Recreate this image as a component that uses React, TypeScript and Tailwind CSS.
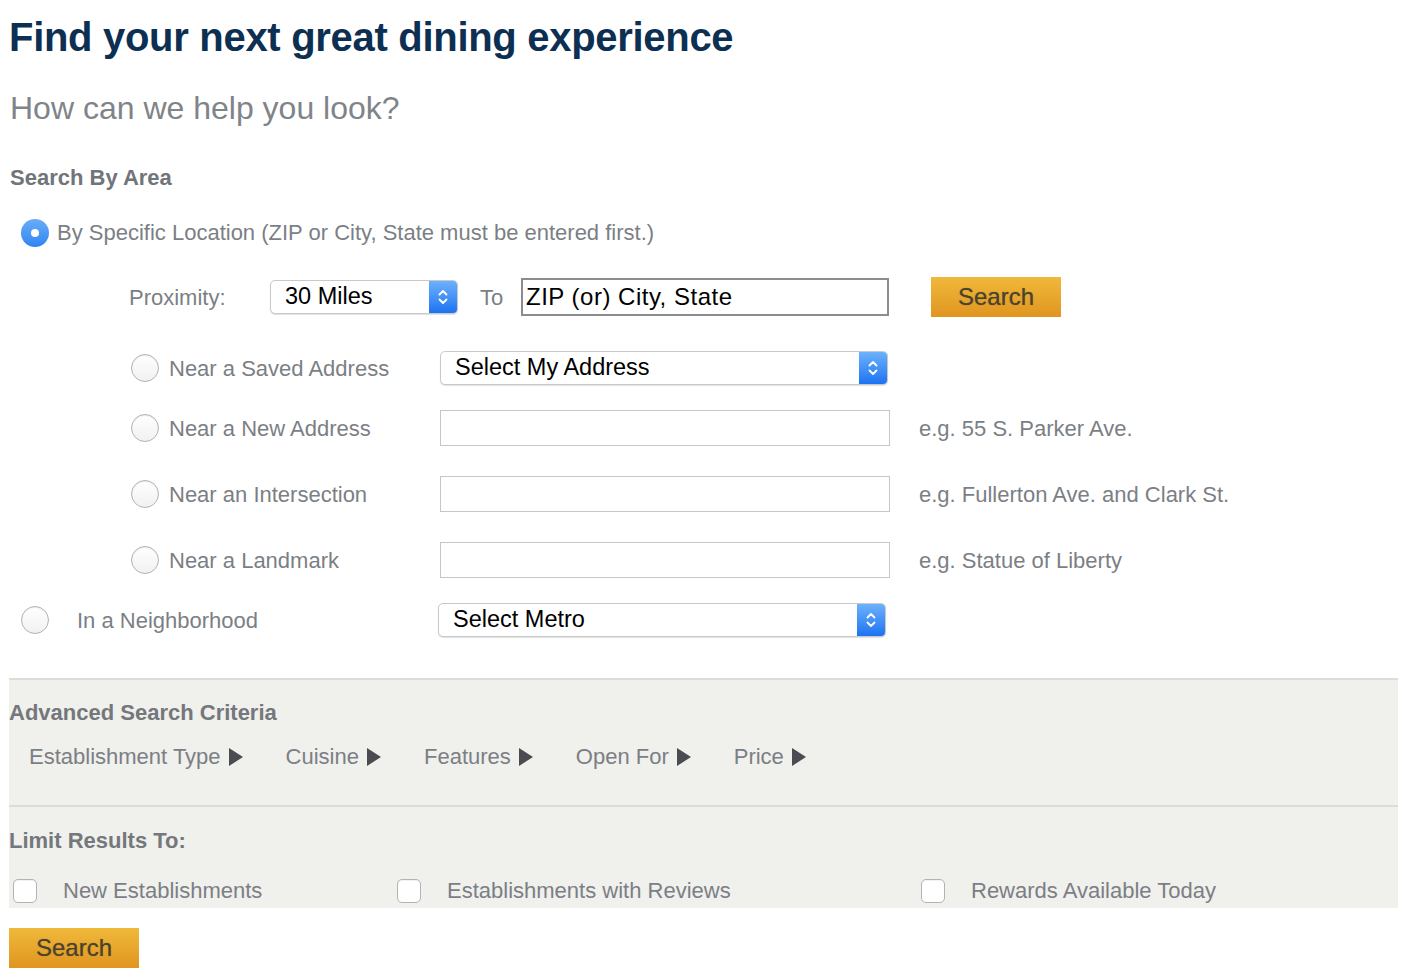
import React from "react";

const font = { fontFamily: '"Liberation Sans", Arial, sans-serif' };

function Chevrons() {
  return (
    <svg width="12" height="20" viewBox="0 0 12 20" fill="none">
      <path d="M2.5 7.5 L6 4 L9.5 7.5" stroke="white" strokeWidth="1.8" strokeLinecap="round" strokeLinejoin="round" />
      <path d="M2.5 12.5 L6 16 L9.5 12.5" stroke="white" strokeWidth="1.8" strokeLinecap="round" strokeLinejoin="round" />
    </svg>
  );
}

function FakeSelect({ label, width }: { label: string; width: string }) {
  return (
    <div
      className={`flex h-[34px] items-stretch overflow-hidden rounded-[5px] border border-[#c9c9c9] bg-white shadow-[0_1px_1px_rgba(0,0,0,0.12)] ${width}`}
    >
      <span className="flex flex-1 items-center pl-[14px] text-[23.5px] text-black">{label}</span>
      <span className="flex w-[28px] items-center justify-center bg-gradient-to-b from-[#6cb1fb] to-[#1c72f2]">
        <Chevrons />
      </span>
    </div>
  );
}

function Radio({ checked = false }: { checked?: boolean }) {
  if (checked) {
    return (
      <span className="flex h-[28px] w-[28px] shrink-0 items-center justify-center rounded-full bg-gradient-to-b from-[#69acf7] to-[#2d86f2]">
        <span className="h-[8px] w-[8px] rounded-full bg-white" />
      </span>
    );
  }
  return (
    <span className="h-[28px] w-[28px] shrink-0 rounded-full border border-[#b3b3b3] bg-gradient-to-b from-white to-[#f1f1f1] shadow-[inset_0_1px_1px_rgba(0,0,0,0.08)]" />
  );
}

function Checkbox() {
  return (
    <span className="h-[24px] w-[24px] shrink-0 rounded-[5px] border border-[#b3b3b3] bg-white shadow-[inset_0_1px_1px_rgba(0,0,0,0.06)]" />
  );
}

function GoldButton({ className = "" }: { className?: string }) {
  return (
    <button
      className={`flex h-[40px] w-[130px] items-center justify-center bg-gradient-to-b from-[#efb93a] to-[#e0951f] text-[24px] text-[#4a4230] ${className}`}
      style={{ textShadow: "0 0 1px rgba(60,50,20,0.5)" }}
    >
      Search
    </button>
  );
}

function Triangle() {
  return (
    <svg width="16" height="20" viewBox="0 0 16 20" className="ml-[7px]">
      <path d="M1 1 L15 10 L1 19 Z" fill="#4b4c51" />
    </svg>
  );
}

const nearRows = [
  { label: "Near a New Address", hint: "e.g. 55 S. Parker Ave." },
  { label: "Near an Intersection", hint: "e.g. Fullerton Ave. and Clark St." },
  { label: "Near a Landmark", hint: "e.g. Statue of Liberty" },
];

const criteria = ["Establishment Type", "Cuisine", "Features", "Open For", "Price"];

export default function App() {
  return (
    <div className="min-h-[980px] bg-white pl-[9px] pr-[12px] text-[22px] text-[#7b7f85]" style={font}>
      <h1 className="pt-[13px] text-[40px] leading-[48px] font-bold tracking-[-0.3px] text-[#0d2f52]">
        Find your next great dining experience
      </h1>
      <p className="mt-[28px] pl-[1px] text-[32px] leading-[38px] text-[#7f8489]">How can we help you look?</p>

      <h2 className="mt-[38px] pl-[1px] text-[22px] leading-[26px] font-bold text-[#717479]">Search By Area</h2>

      <div className="mt-[25px] flex items-center gap-[8px] pl-[12px]">
        <Radio checked />
        <span>By Specific Location (ZIP or City, State must be entered first.)</span>
      </div>

      <div className="mt-[28px] flex items-center pl-[120px]">
        <span className="w-[141px]">Proximity:</span>
        <FakeSelect label="30 Miles" width="w-[188px]" />
        <span className="ml-[22px] w-[41px]">To</span>
        <div className="flex h-[38px] w-[368px] items-center border-2 border-[#8a8d90] pl-[3px] text-[24px] tracking-[0.5px] text-black">
          ZIP (or) City, State
        </div>
        <GoldButton className="ml-[42px]" />
      </div>

      <div className="mt-[34px] flex items-center pl-[122px]">
        <div className="flex w-[309px] items-center gap-[10px]">
          <Radio />
          <span>Near a Saved Address</span>
        </div>
        <FakeSelect label="Select My Address" width="w-[448px]" />
      </div>

      <div className="mt-[25px] flex flex-col gap-[30px] pl-[122px]">
        {nearRows.map((r) => (
          <div key={r.label} className="flex items-center">
            <div className="flex w-[309px] items-center gap-[10px]">
              <Radio />
              <span>{r.label}</span>
            </div>
            <div className="h-[36px] w-[450px] border border-[#c6c6c6] bg-white" />
            <span className="ml-[29px]">{r.hint}</span>
          </div>
        ))}
      </div>

      <div className="mt-[25px] flex items-center pl-[12px]">
        <div className="flex w-[417px] items-center gap-[28px]">
          <Radio />
          <span>In a Neighborhood</span>
        </div>
        <FakeSelect label="Select Metro" width="w-[448px]" />
      </div>

      <div className="mt-[41px] border-t-2 border-[#dcdcd8] bg-[#f0f0ec]">
        <h3 className="pt-[20px] text-[22px] leading-[26px] font-bold text-[#74777c]">Advanced Search Criteria</h3>
        <div className="mt-[14px] flex items-center gap-[42px] pb-[32px] pl-[20px]">
          {criteria.map((c) => (
            <span key={c} className="flex items-center">
              {c}
              <Triangle />
            </span>
          ))}
        </div>
        <div className="border-t-2 border-[#dcdcd8]">
          <h3 className="pt-[21px] text-[22px] leading-[26px] font-bold text-[#74777c]">Limit Results To:</h3>
          <div className="mt-[20px] flex items-center pb-[1px] pl-[4px]">
            <div className="flex w-[384px] items-center gap-[26px]">
              <Checkbox />
              <span>New Establishments</span>
            </div>
            <div className="flex w-[524px] items-center gap-[26px]">
              <Checkbox />
              <span>Establishments with Reviews</span>
            </div>
            <div className="flex items-center gap-[26px]">
              <Checkbox />
              <span>Rewards Available Today</span>
            </div>
          </div>
        </div>
      </div>

      <GoldButton className="mt-[20px]" />
    </div>
  );
}
